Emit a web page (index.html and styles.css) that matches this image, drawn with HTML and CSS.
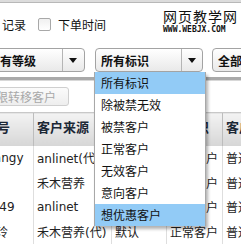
FILE: index.html
```html
<!DOCTYPE html>
<html lang="zh-CN">
<head>
    <meta charset="UTF-8">
    <title>客户列表</title>
    <link rel="stylesheet" href="styles.css">
</head>
<body>
    <div class="page">
        <div class="topbar"></div>

        <div class="filters">
            <span>记录</span>
            <span class="checkbox"></span>
            <span class="check-label">下单时间</span>
        </div>

        <div class="toolbar">
            <div class="select level">
                <span class="select-label">所有等级</span>
                <span class="select-arrow"></span>
            </div>
            <div class="select mark">
                <span class="select-label">所有标识</span>
                <span class="select-arrow"></span>
                <ul class="menu">
                    <li class="active">所有标识</li>
                    <li>除被禁无效</li>
                    <li>被禁客户</li>
                    <li>正常客户</li>
                    <li>无效客户</li>
                    <li>意向客户</li>
                    <li class="active">想优惠客户</li>
                </ul>
            </div>
            <div class="select state">
                <span class="select-label">全部状态</span>
            </div>
        </div>

        <div class="actions">
            <button class="btn" disabled>权限转移客户</button>
        </div>

        <table class="grid">
            <colgroup>
                <col class="col-id">
                <col class="col-source">
                <col class="col-level">
                <col class="col-mark">
                <col class="col-type">
            </colgroup>
            <thead>
                <tr>
                    <th>编号</th>
                    <th>客户来源</th>
                    <th>等级</th>
                    <th class="center">标识</th>
                    <th>客户</th>
                </tr>
            </thead>
            <tbody>
                <tr>
                    <td>wangy</td>
                    <td>anlinet(代)</td>
                    <td>默认</td>
                    <td>正常客户</td>
                    <td>普通</td>
                </tr>
                <tr>
                    <td></td>
                    <td>禾木营养</td>
                    <td>默认</td>
                    <td>正常客户</td>
                    <td>普通</td>
                </tr>
                <tr>
                    <td>1749</td>
                    <td>anlinet</td>
                    <td>默认</td>
                    <td>正常客户</td>
                    <td>普通</td>
                </tr>
                <tr>
                    <td>张玲</td>
                    <td>禾木营养(代)</td>
                    <td>默认</td>
                    <td>正常客户</td>
                    <td>普通</td>
                </tr>
            </tbody>
        </table>

        <div class="logo">
            <div class="logo-cn">网页教学网</div>
            <div class="logo-url">WWW.WEBJX.COM</div>
        </div>
    </div>
</body>
</html>
```

FILE: styles.css
```css
body {
    margin: 0;
    padding: 0;
    background-color: #fff;
    font-family: "DejaVu Sans", "Noto Sans CJK SC", sans-serif;
    font-size: 12px;
    color: #222;
    overflow: hidden;
}

.page {
    position: relative;
    width: 241px;
    height: 247px;
    overflow: hidden;
}

.topbar {
    height: 2px;
    background-color: #dcdcdc;
    border-bottom: 1px solid #b8b8b8;
}

.filters {
    display: flex;
    align-items: center;
    height: 42px;
    padding-left: 2px;
    font-family: "Noto Sans CJK SC", sans-serif;
    color: #111;
}

.checkbox {
    width: 11px;
    height: 11px;
    margin-left: 12px;
    border: 1px solid #a8a8a8;
    border-radius: 2px;
    background: linear-gradient(#f0f0f0, #ffffff);
}

.check-label {
    margin-left: 7px;
}

.toolbar {
    display: flex;
    gap: 10px;
    margin-left: -18px;
    padding: 3px 0 5px;
    border-bottom: 3px solid #a9a9a9;
    box-shadow: 0 1px 0 #d8d8d8;
}

.select {
    position: relative;
    display: flex;
    flex-shrink: 0;
    align-items: center;
    box-sizing: border-box;
    height: 24px;
    border: 1px solid #a3a3a3;
    border-radius: 4px;
    background: linear-gradient(#ffffff, #e9e9e9);
    font-family: "Noto Sans CJK SC", sans-serif;
    font-weight: bold;
    color: #111;
}

.select-label {
    flex-grow: 1;
    padding-left: 5px;
    white-space: nowrap;
}

.select-arrow {
    position: relative;
    align-self: stretch;
    width: 20px;
    border-left: 1px solid #b5b5b5;
}

.level .select-arrow {
    width: 21px;
}

.select-arrow::after {
    content: "";
    position: absolute;
    left: 6px;
    top: 9px;
    border-left: 4px solid transparent;
    border-right: 4px solid transparent;
    border-top: 5px solid #111;
}

.level {
    width: 103px;
}

.mark {
    width: 108px;
}

.state {
    width: 80px;
    margin-left: -1px;
}

.menu {
    position: absolute;
    top: 23px;
    left: -2px;
    width: 110px;
    margin: 0;
    padding: 0;
    list-style: none;
    background-color: #fff;
    border-left: 1px solid #a8a8a8;
    border-right: 1px solid #a8a8a8;
    box-shadow: 2px 3px 3px rgba(0, 0, 0, 0.3);
    font-weight: normal;
    z-index: 2;
}

.menu li {
    height: 22px;
    line-height: 22px;
    padding-left: 6px;
    color: #111;
}

.menu li.active {
    background-color: #92cbf6;
}

.actions {
    padding: 7px 0 6px;
    margin-left: -29px;
}

.btn {
    height: 19px;
    padding: 0 12px;
    border: 1px solid #cfcfcf;
    border-radius: 3px;
    background: linear-gradient(#fbfbfb, #eeeeee);
    font-family: "Noto Sans CJK SC", sans-serif;
    font-size: 12px;
    color: #a8a8a8;
}

.grid {
    border-collapse: collapse;
    table-layout: fixed;
    width: 282px;
    margin-left: -20px;
}

.col-id { width: 53px; }
.col-source { width: 78px; }
.col-level { width: 55px; }
.col-mark { width: 56px; }
.col-type { width: 40px; }

.grid th,
.grid td {
    padding: 0 0 0 3px;
    text-align: left;
    white-space: nowrap;
    overflow: hidden;
}

.grid th {
    height: 33px;
    vertical-align: top;
    padding-top: 4px;
    box-sizing: border-box;
    border-top: 1px solid #c8c8c8;
    border-left: 1px solid #bdbdbd;
    background: linear-gradient(#f3f3f3, #d6d6d6);
    font-family: "Noto Sans CJK SC", sans-serif;
    font-size: 13px;
    color: #1c2836;
}

.grid th.center {
    text-align: center;
}

.grid td {
    height: 24.5px;
    border-left: 1px solid #dedede;
}

.logo {
    position: absolute;
    top: 8px;
    left: 163px;
    z-index: 3;
}

.logo-cn {
    font-family: "Noto Sans CJK SC", sans-serif;
    font-size: 14px;
    line-height: 17px;
    letter-spacing: 1px;
    color: #111;
}

.logo-url {
    font-family: "DejaVu Sans Mono", monospace;
    font-size: 8px;
    font-weight: bold;
    line-height: 9px;
    color: #111;
}
```
